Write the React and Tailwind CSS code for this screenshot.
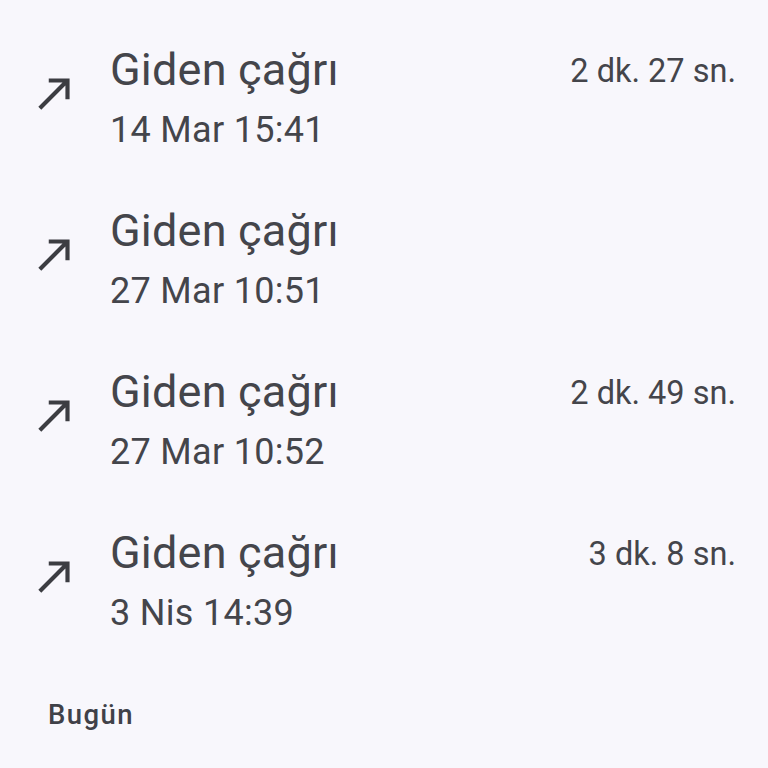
import React from "react";

const rows = [
  { date: "14 Mar 15:41", dur: "2 dk. 27 sn." },
  { date: "27 Mar 10:51", dur: "" },
  { date: "27 Mar 10:52", dur: "2 dk. 49 sn." },
  { date: "3 Nis 14:39", dur: "3 dk. 8 sn." },
];

function Arrow() {
  return (
    <svg viewBox="0 0 24 24" className="w-[50px] h-[50px]" fill="#3c3d42">
      <path d="M9 5v2h6.59L4 18.59 5.41 20 17 8.41V15h2V5z" />
    </svg>
  );
}

export default function App() {
  return (
    <div
      className="w-[768px] h-[768px] bg-[#f8f7fc] text-[#44454b] overflow-hidden"
      style={{ fontFamily: "Roboto, 'Noto Sans', sans-serif" }}
    >
      <div className="pt-[40px]">
        {rows.map((r, i) => (
          <div key={i} className="flex h-[161px] pl-[30px] pr-[32px]">
            <div className="w-[80px] flex items-start pt-[28px]">
              <Arrow />
            </div>
            <div className="flex-1 flex flex-col">
              <div className="text-[45px] leading-[60px] tracking-[0.2px]">Giden çağrı</div>
              <div className="text-[36px] leading-[60px] tracking-[0.3px]">{r.date}</div>
            </div>
            <div className="text-[32.5px] leading-[62px]">{r.dur}</div>
          </div>
        ))}
        <div className="pl-[48px] pt-[16px] text-[27.5px] font-medium leading-[30px] tracking-[1.4px] text-[#404148]">
          Bugün
        </div>
      </div>
    </div>
  );
}
